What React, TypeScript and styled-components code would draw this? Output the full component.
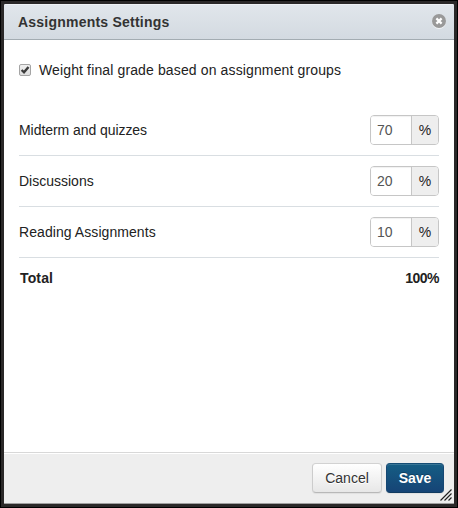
import React, { useState } from "react";
import styled, { createGlobalStyle } from "styled-components";

const GlobalStyle = createGlobalStyle`
  * { box-sizing: border-box; }
  body {
    margin: 0;
    background: #000;
    font-family: "Liberation Sans", Arial, sans-serif;
    font-size: 14px;
    color: #222;
  }
`;

const Frame = styled.div`
  width: 458px;
  height: 508px;
  padding: 3px;
  border: 1px solid #000;
  background: #2a2828;
`;

const Dialog = styled.section`
  position: relative;
  display: flex;
  flex-direction: column;
  height: 100%;
  background: #fff;
  border-radius: 2px 2px 0 0;
  border-bottom: 1px solid #a0a0a0;
  overflow: hidden;
`;

const Header = styled.header`
  display: flex;
  align-items: center;
  justify-content: space-between;
  flex: none;
  height: 36px;
  padding: 0 8px 0 14px;
  border-bottom: 1px solid #a3acb2;
  background: linear-gradient(#e1e6eb, #d3dae1);
  box-shadow: inset 0 1px 0 #eef1f4;
`;

const Title = styled.h1`
  margin: 0;
  font-size: 14px;
  line-height: 18px;
  letter-spacing: 0.22px;
  color: #333;
`;

const CloseButton = styled.button`
  display: flex;
  width: 14px;
  height: 15px;
  padding: 0;
  border: 0;
  background: none;
`;

const Body = styled.div`
  flex: 1;
  padding: 20px 15px 0;
`;

const CheckLabel = styled.label`
  display: flex;
  align-items: center;
  height: 20px;
  margin-bottom: 25px;
`;

const CheckText = styled.span`
  margin-left: 8px;
  letter-spacing: 0.13px;
`;

const HiddenCheck = styled.input`
  position: absolute;
  opacity: 0;
  width: 12px;
  height: 12px;
  margin: 0;
`;

const Row = styled.div`
  display: flex;
  align-items: center;
  justify-content: space-between;
  height: 51px;
  border-bottom: 1px solid #d9dee2;
`;

const Name = styled.span<{ $spacing: number }>`
  letter-spacing: ${(p) => p.$spacing}px;
`;

const Group = styled.div`
  display: flex;
  width: 69px;
  height: 30px;
  border: 1px solid #c6c6c6;
  border-radius: 4px;
  overflow: hidden;
`;

const Weight = styled.input`
  width: 40px;
  padding: 0 0 0 6px;
  border: 0;
  outline: 0;
  background: #fff;
  box-shadow: inset 0 1px 1px rgba(0, 0, 0, 0.06);
  color: #555;
  font: inherit;
`;

const Unit = styled.span`
  flex: 1;
  border-left: 1px solid #c6c6c6;
  background: #eee;
  line-height: 28px;
  text-align: center;
`;

const Total = styled.div`
  display: flex;
  align-items: center;
  justify-content: space-between;
  height: 40px;
  padding-left: 1px;
  font-weight: bold;
`;

const TotalLabel = styled.span`
  letter-spacing: 0.15px;
`;

const TotalValue = styled.span`
  letter-spacing: -0.5px;
`;

const Footer = styled.footer`
  display: flex;
  flex: none;
  gap: 4px;
  justify-content: flex-end;
  height: 51px;
  padding: 10px 10px 0;
  border-top: 1px solid #d8d8d8;
  background: #eee;
  box-shadow: inset 0 1px 0 #fff;
`;

const Button = styled.button<{ $primary?: boolean }>`
  width: ${(p) => (p.$primary ? 58 : 70)}px;
  height: 30px;
  padding: 0;
  border: 1px solid;
  border-color: ${(p) => (p.$primary ? "#154d75 #154773 #113b60" : "#d2d2d2 #ccc #b8b8b8")};
  border-radius: 4px;
  background: ${(p) => (p.$primary ? "linear-gradient(#155d84, #164476)" : "linear-gradient(#fff, #e7e7e7)")};
  box-shadow: inset 0 1px 0 rgba(255, 255, 255, 0.15), 0 1px 1px rgba(0, 0, 0, 0.06);
  color: ${(p) => (p.$primary ? "#fff" : "#333")};
  font: inherit;
  font-weight: ${(p) => (p.$primary ? "bold" : "normal")};
  text-shadow: ${(p) => (p.$primary ? "0 -1px 0 rgba(0,0,0,.25)" : "0 1px 0 #fff")};
`;

const ResizeGrip = styled.svg`
  position: absolute;
  right: 2px;
  bottom: 2px;
`;

const GROUPS = [
  { name: "Midterm and quizzes", weight: 70, spacing: -0.06 },
  { name: "Discussions", weight: 20, spacing: 0 },
  { name: "Reading Assignments", weight: 10, spacing: 0.07 },
];

export default function App() {
  const [weighted, setWeighted] = useState(true);
  return (
    <Frame>
      <GlobalStyle />
      <Dialog role="dialog" aria-label="Assignments Settings">
        <Header>
          <Title>Assignments Settings</Title>
          <CloseButton aria-label="Close">
            <svg width="14" height="15" viewBox="0 0 14 15">
              <circle cx="7" cy="8" r="7" fill="#f1f3f5" />
              <circle cx="7" cy="7" r="7" fill="#999" />
              <path d="M4.4 4.4L9.6 9.6M9.6 4.4L4.4 9.6" stroke="#fff" strokeWidth="2.2" />
            </svg>
          </CloseButton>
        </Header>
        <Body>
          <CheckLabel>
            <HiddenCheck type="checkbox" checked={weighted} onChange={() => setWeighted(!weighted)} />
            <svg width="12" height="12" viewBox="0 0 12 12">
              <defs>
                <linearGradient id="box" x2="0" y2="1">
                  <stop stopColor="#f0f0f0" />
                  <stop offset="1" stopColor="#dedede" />
                </linearGradient>
              </defs>
              <rect x=".5" y=".5" width="11" height="11" rx="1.5" fill="url(#box)" stroke="#a4a4a4" />
              {weighted && <path d="M2.6 6L5 8.3L9.5 2.9" fill="none" stroke="#3c3c3c" strokeWidth="2.4" />}
            </svg>
            <CheckText>Weight final grade based on assignment groups</CheckText>
          </CheckLabel>
          {GROUPS.map((g) => (
            <Row key={g.name}>
              <Name $spacing={g.spacing}>{g.name}</Name>
              <Group>
                <Weight defaultValue={g.weight} aria-label={g.name} />
                <Unit>%</Unit>
              </Group>
            </Row>
          ))}
          <Total>
            <TotalLabel>Total</TotalLabel>
            <TotalValue>100%</TotalValue>
          </Total>
        </Body>
        <Footer>
          <Button>Cancel</Button>
          <Button $primary>Save</Button>
        </Footer>
        <ResizeGrip width="12" height="12" viewBox="0 0 12 12">
          <path d="M.5 11.5L11.5 .5M4.5 11.5L11.5 4.5M8.5 11.5L11.5 8.5" stroke="#222" strokeWidth="1.2" />
        </ResizeGrip>
      </Dialog>
    </Frame>
  );
}
